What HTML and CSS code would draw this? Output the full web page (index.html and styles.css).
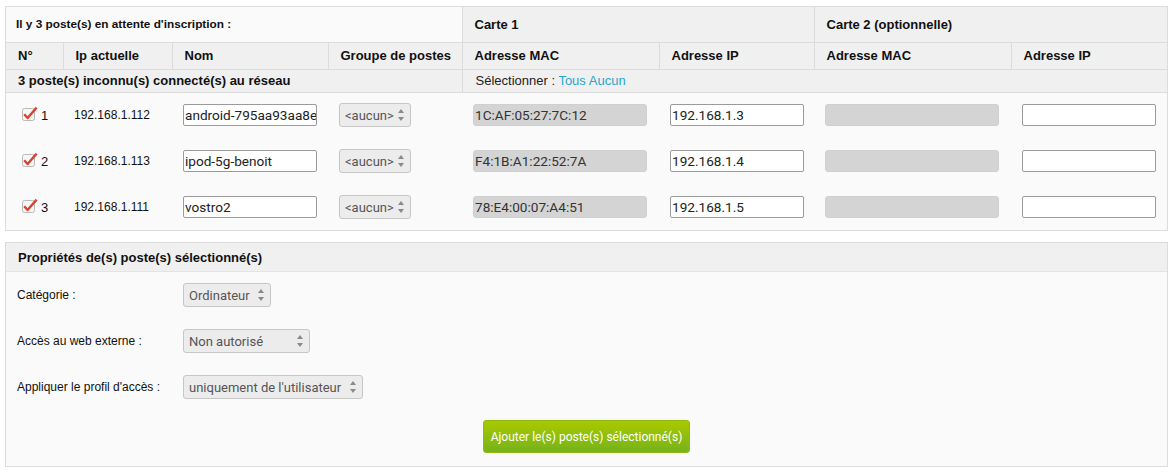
FILE: index.html
```html
<!DOCTYPE html>
<html lang="fr">
<head>
<meta charset="utf-8">
<title>Postes en attente</title>
<link rel="stylesheet" href="styles.css">
</head>
<body>
<div class="panel">
  <table class="hosts">
    <colgroup>
      <col class="c-num"><col class="c-ip"><col class="c-nom"><col class="c-grp">
      <col class="c-mac"><col class="c-ipa"><col class="c-mac2"><col class="c-ip2">
    </colgroup>
    <thead>
      <tr class="r1">
        <th colspan="4" class="title">Il y 3 poste(s) en attente d'inscription :</th>
        <th colspan="2" class="grey">Carte 1</th>
        <th colspan="2" class="grey">Carte 2 (optionnelle)</th>
      </tr>
      <tr class="r2">
        <th>N°</th><th>Ip actuelle</th><th>Nom</th><th>Groupe de postes</th>
        <th>Adresse MAC</th><th>Adresse IP</th><th>Adresse MAC</th><th>Adresse IP</th>
      </tr>
      <tr class="r3">
        <th colspan="4">3 poste(s) inconnu(s) connecté(s) au réseau</th>
        <td colspan="4" class="sel">Sélectionner : <a href="#">Tous</a> <a href="#">Aucun</a></td>
      </tr>
    </thead>
    <tbody>
      <tr>
        <td class="num"><span class="check"><svg width="16" height="16" viewBox="0 0 16 16"><rect x="0.5" y="2.5" width="12" height="12" rx="2" fill="#f6f6f6" stroke="#b9b9b9"/><path d="M2.2 8.3 L5.6 12 L14.6 1.6" fill="none" stroke="#d9432f" stroke-width="2.4" stroke-linejoin="round"/></svg></span>1</td>
        <td class="ip">192.168.1.112</td>
        <td><span class="input w134">android-795aa93aa8e</span></td>
        <td><span class="select w72">&lt;aucun&gt;<span class="arrows"><svg width="6" height="14" viewBox="0 0 6 14"><path d="M3 1 L6 5 L0 5 Z M0 9 L6 9 L3 13 Z" fill="#8a8a8a"/></svg></span></span></td>
        <td><span class="input mac">1C:AF:05:27:7C:12</span></td>
        <td><span class="input w134">192.168.1.3</span></td>
        <td><span class="input mac"></span></td>
        <td><span class="input w134"></span></td>
      </tr>
      <tr>
        <td class="num"><span class="check"><svg width="16" height="16" viewBox="0 0 16 16"><rect x="0.5" y="2.5" width="12" height="12" rx="2" fill="#f6f6f6" stroke="#b9b9b9"/><path d="M2.2 8.3 L5.6 12 L14.6 1.6" fill="none" stroke="#d9432f" stroke-width="2.4" stroke-linejoin="round"/></svg></span>2</td>
        <td class="ip">192.168.1.113</td>
        <td><span class="input w134">ipod-5g-benoit</span></td>
        <td><span class="select w72">&lt;aucun&gt;<span class="arrows"><svg width="6" height="14" viewBox="0 0 6 14"><path d="M3 1 L6 5 L0 5 Z M0 9 L6 9 L3 13 Z" fill="#8a8a8a"/></svg></span></span></td>
        <td><span class="input mac">F4:1B:A1:22:52:7A</span></td>
        <td><span class="input w134">192.168.1.4</span></td>
        <td><span class="input mac"></span></td>
        <td><span class="input w134"></span></td>
      </tr>
      <tr>
        <td class="num"><span class="check"><svg width="16" height="16" viewBox="0 0 16 16"><rect x="0.5" y="2.5" width="12" height="12" rx="2" fill="#f6f6f6" stroke="#b9b9b9"/><path d="M2.2 8.3 L5.6 12 L14.6 1.6" fill="none" stroke="#d9432f" stroke-width="2.4" stroke-linejoin="round"/></svg></span>3</td>
        <td class="ip">192.168.1.111</td>
        <td><span class="input w134">vostro2</span></td>
        <td><span class="select w72">&lt;aucun&gt;<span class="arrows"><svg width="6" height="14" viewBox="0 0 6 14"><path d="M3 1 L6 5 L0 5 Z M0 9 L6 9 L3 13 Z" fill="#8a8a8a"/></svg></span></span></td>
        <td><span class="input mac">78:E4:00:07:A4:51</span></td>
        <td><span class="input w134">192.168.1.5</span></td>
        <td><span class="input mac"></span></td>
        <td><span class="input w134"></span></td>
      </tr>
    </tbody>
  </table>
</div>

<div class="panel props">
  <div class="props-head">Propriétés de(s) poste(s) sélectionné(s)</div>
  <div class="form">
    <div class="label">Catégorie :</div>
    <div><span class="select w88">Ordinateur<span class="arrows"><svg width="6" height="14" viewBox="0 0 6 14"><path d="M3 1 L6 5 L0 5 Z M0 9 L6 9 L3 13 Z" fill="#8a8a8a"/></svg></span></span></div>
    <div class="label">Accès au web externe :</div>
    <div><span class="select w127">Non autorisé<span class="arrows"><svg width="6" height="14" viewBox="0 0 6 14"><path d="M3 1 L6 5 L0 5 Z M0 9 L6 9 L3 13 Z" fill="#8a8a8a"/></svg></span></span></div>
    <div class="label">Appliquer le profil d'accès :</div>
    <div><span class="select w180">uniquement de l'utilisateur<span class="arrows"><svg width="6" height="14" viewBox="0 0 6 14"><path d="M3 1 L6 5 L0 5 Z M0 9 L6 9 L3 13 Z" fill="#8a8a8a"/></svg></span></span></div>
  </div>
  <div class="actions">
    <button class="btn" type="button">Ajouter le(s) poste(s) sélectionné(s)</button>
  </div>
</div>
</body>
</html>
```

FILE: styles.css
```css
* { box-sizing: border-box; }

body {
  margin: 0;
  padding: 6px 6px 0 5px;
  background: #ffffff;
  font-family: "Liberation Sans", Arial, sans-serif;
  color: #111;
}

.panel {
  width: 1163px;
  border: 1px solid #dcdcdc;
  background: #fafafa;
}

.hosts {
  width: 100%;
  border-collapse: collapse;
  table-layout: fixed;
}

.c-num { width: 57px; }
.c-ip { width: 109px; }
.c-nom { width: 156px; }
.c-grp { width: 134px; }
.c-mac { width: 197px; }
.c-ipa { width: 155px; }
.c-mac2 { width: 197px; }
.c-ip2 { width: 156px; }

.hosts th {
  text-align: left;
  font-weight: bold;
  font-size: 13px;
  padding: 0 0 0 12px;
  border-left: 1px solid #dcdcdc;
  border-bottom: 1px solid #dcdcdc;
  background: #f0f0f0;
  white-space: nowrap;
}
.hosts th:first-child { border-left: none; }

.hosts .r1 th { height: 35px; }
.hosts .r1 th.title { background: #fafafa; font-size: 11.8px; padding-left: 10px; }
.hosts .r2 th { height: 27px; }
.hosts .r3 th, .hosts .r3 td { height: 23px; }

.hosts .sel {
  background: #f0f0f0;
  border-left: 1px solid #dcdcdc;
  border-bottom: 1px solid #dcdcdc;
  font-size: 13px;
  padding-left: 13px;
  color: #222;
}
.sel a { color: #2aa6cf; text-decoration: none; }

.hosts tbody td {
  height: 46px;
  padding: 0 0 0 11px;
  vertical-align: middle;
  font-size: 12px;
  white-space: nowrap;
}
.hosts tbody td.num {
  padding-left: 16px;
  font-size: 13px;
}
.check {
  display: inline-block;
  vertical-align: middle;
  width: 16px;
  height: 16px;
  margin: -4px 3px 0 0;
}
.check svg { display: block; }

.input {
  display: inline-block;
  vertical-align: middle;
  height: 22px;
  line-height: 21px;
  border: 1px solid #9a9a9a;
  border-radius: 2px;
  background: #fff;
  font-family: Roboto, "Noto Sans", sans-serif;
  font-size: 13.6px;
  color: #222;
  padding: 0 1px;
  overflow: hidden;
  white-space: nowrap;
}
.w134 { width: 134px; }
.input.mac {
  width: 174px;
  background: #d4d4d4;
  border-color: #d0d0d0;
  border-radius: 3px;
  color: #333;
}

.select {
  display: inline-flex;
  align-items: center;
  justify-content: space-between;
  vertical-align: middle;
  height: 24px;
  border: 1px solid #c6c6c6;
  border-radius: 3px;
  background: #ececec;
  font-family: Roboto, "Noto Sans", sans-serif;
  font-size: 13px;
  color: #555;
  padding: 0 6px 0 5px;
  white-space: nowrap;
}
.select .arrows { display: flex; margin-left: 4px; }
.select .arrows svg { display: block; }
.w72 { width: 72px; }
.w88 { width: 88px; }
.w127 { width: 127px; }
.w180 { width: 180px; }

.props { margin-top: 11px; height: 225px; display: flex; flex-direction: column; }

.props-head {
  height: 29px;
  background: #f0f0f0;
  border-bottom: 1px solid #e4e4e4;
  font-size: 13px;
  font-weight: bold;
  padding-left: 12px;
  display: flex;
  align-items: center;
}

.form {
  display: grid;
  grid-template-columns: 166px auto;
  grid-auto-rows: 24px;
  row-gap: 22px;
  align-items: center;
  padding: 11px 0 0 11px;
  font-size: 12px;
}
.form .label { color: #111; }

.actions {
  display: flex;
  justify-content: center;
  padding-top: 21px;
}

.btn {
  width: 207px;
  height: 33px;
  border: 1px solid #8fbb10;
  border-radius: 3px;
  background: linear-gradient(#a9c900, #76b21c);
  color: #fff;
  font-family: Roboto, "Noto Sans", sans-serif;
  font-size: 12px;
  padding: 0;
}
```
